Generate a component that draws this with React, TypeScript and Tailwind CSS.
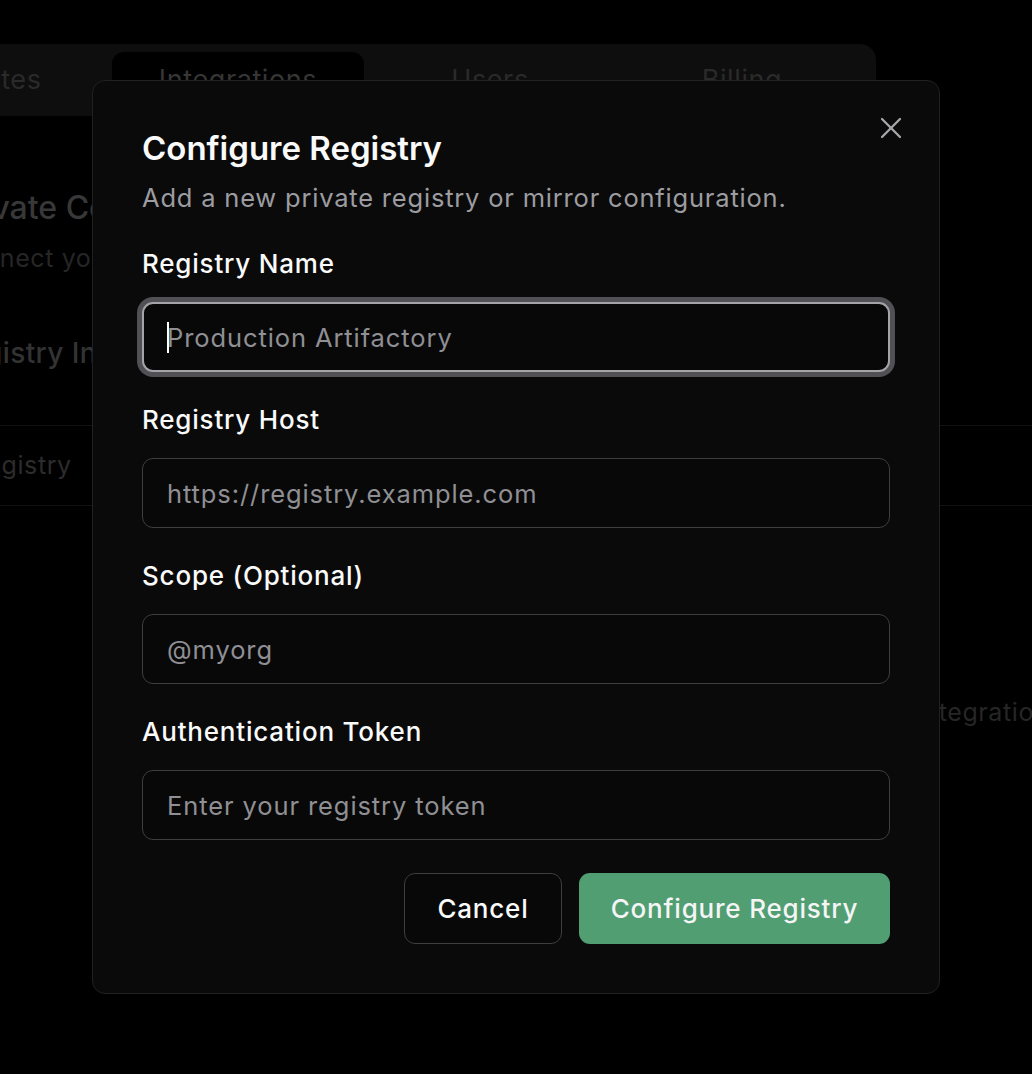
import { X } from "lucide-react";

const fields = [
  { label: "Registry Name", placeholder: "Production Artifactory", focused: true },
  { label: "Registry Host", placeholder: "https://registry.example.com", focused: false },
  { label: "Scope (Optional)", placeholder: "@myorg", focused: false },
  { label: "Authentication Token", placeholder: "Enter your registry token", focused: false },
];

const tabs = ["Updates", "Integrations", "Users", "Billing"];

const BackgroundPage = () => {
  return (
    <div className="w-[1200px] ml-[-148px] pt-[44px]">
      <div className="w-[1024px] h-[72px] p-2 grid grid-cols-4 bg-[#0e0e0e] rounded-[16px]">
        {tabs.map((tab) => (
          <div
            key={tab}
            className={
              tab === "Integrations"
                ? "flex items-center justify-center rounded-[12px] bg-black text-[27px] tracking-[0.6px] text-[#363636]"
                : "flex items-center justify-center text-[27px] tracking-[0.6px] text-[#2a2a2a]"
            }
          >
            {tab}
          </div>
        ))}
      </div>

      <div className="pl-[98px] pt-[73px]">
        <h2 className="text-[32px] leading-[38px] font-medium text-[#383838]">
          Private Container Registries
        </h2>
        <p className="mt-[15px] text-[25px] tracking-[0.6px] leading-[32px] text-[#262626]">
          Connect your private registries and package mirrors.
        </p>
        <h3 className="mt-[61px] text-[28px] tracking-[0.4px] leading-[36px] font-medium text-[#333333]">
          Registry Integrations
        </h3>
      </div>

      <div className="mt-[54px] border-t border-[#121212]">
        <div className="h-[80px] flex items-center pl-[118px] border-b border-[#121212] text-[25px] tracking-[0.6px] text-[#2c2c2c]">
          Registry
        </div>
        <div className="h-[414px] flex items-center pl-[1064px] text-[25px] tracking-[0.6px] text-[#262626]">
          Integrations
        </div>
      </div>
    </div>
  );
};

const Field = ({ label, placeholder, focused }: { label: string; placeholder: string; focused: boolean }) => {
  return (
    <div className="flex flex-col">
      <label className="text-[26px] leading-[35px] font-medium tracking-[0.8px] text-[#fafafa]">{label}</label>
      <div className="relative mt-[21px]">
        <input
          type="text"
          placeholder={placeholder}
          className={
            focused
              ? "w-full h-[70px] rounded-[11px] border-2 border-[#a3a3a8] bg-[#080808] pl-[23px] text-[25.5px] tracking-[0.9px] text-white placeholder:text-[#8f8f94] outline-none shadow-[0_0_0_5px_#505055]"
              : "w-full h-[70px] rounded-[11px] border border-[#3d3d42] bg-[#080808] pl-[24px] text-[25.5px] tracking-[0.9px] text-white placeholder:text-[#8f8f94] outline-none"
          }
        />
        {focused && <span className="absolute left-[25px] top-[20px] w-[2px] h-[31px] bg-white" />}
      </div>
    </div>
  );
};

export default function App() {
  return (
    <div className="relative h-[1074px] bg-black overflow-hidden font-['Inter',sans-serif]">
      <BackgroundPage />

      <div className="fixed inset-0 flex items-center justify-center">
        <div className="relative w-[848px] rounded-[13px] border border-[#212121] bg-[#0a0a0a] p-[49px]">
          <button className="absolute right-[30px] top-[29px] text-[#a8a8ad]">
            <X size={36} strokeWidth={1.5} />
          </button>

          <h1 className="text-[33px] leading-[36px] font-semibold text-[#fafafa]">
            Configure Registry
          </h1>
          <p className="mt-[14px] text-[25.5px] leading-[35px] tracking-[0.8px] text-[#9c9ca1]">
            Add a new private registry or mirror configuration.
          </p>

          <div className="mt-[31px] flex flex-col gap-[30px]">
            {fields.map((f) => (
              <Field key={f.label} label={f.label} placeholder={f.placeholder} focused={f.focused} />
            ))}
          </div>

          <div className="mt-[33px] flex justify-end gap-[17px]">
            <button className="h-[71px] w-[158px] rounded-[11px] border border-[#3d3d42] bg-[#080808] text-[26px] tracking-[0.8px] font-medium text-[#fafafa]">
              Cancel
            </button>
            <button className="h-[71px] w-[311px] rounded-[11px] bg-[#519e73] text-[26px] tracking-[0.8px] font-medium text-[#f5f5f5]">
              Configure Registry
            </button>
          </div>
        </div>
      </div>
    </div>
  );
}
